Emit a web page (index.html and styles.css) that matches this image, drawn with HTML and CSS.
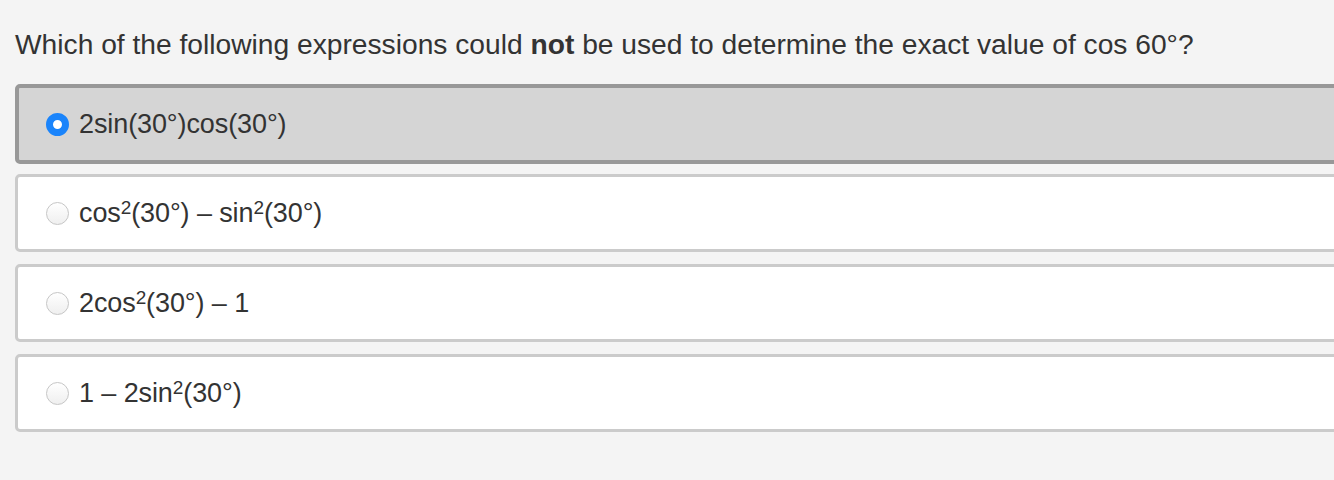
FILE: index.html
```html
<!DOCTYPE html>
<html>
<head>
<meta charset="utf-8">
<link rel="stylesheet" href="styles.css">
</head>
<body>
<div class="question">
  <p class="prompt">Which of the following expressions could <b>not</b> be used to determine the exact value of cos 60°?</p>
  <div class="options">
    <label class="option selected">
      <span class="radio checked"></span>
      <span class="text">2sin(30°)cos(30°)</span>
    </label>
    <label class="option">
      <span class="radio"></span>
      <span class="text">cos<sup>2</sup>(30°) – sin<sup>2</sup>(30°)</span>
    </label>
    <label class="option">
      <span class="radio"></span>
      <span class="text">2cos<sup>2</sup>(30°) – 1</span>
    </label>
    <label class="option">
      <span class="radio"></span>
      <span class="text">1 – 2sin<sup>2</sup>(30°)</span>
    </label>
  </div>
</div>
</body>
</html>
```
FILE: styles.css
```css
html, body {
  margin: 0;
  padding: 0;
  background: #f4f4f4;
}
body {
  font-family: "Liberation Sans", Arial, sans-serif;
  color: #333;
  width: 1334px;
  height: 480px;
  overflow: hidden;
}
.question {
  padding: 0 0 0 15px;
}
.prompt {
  margin: 0;
  padding-top: 28px;
  font-size: 28.2px;
  line-height: 32px;
  height: 56px;
}
.prompt b {
  font-weight: bold;
}
.options {
  display: flex;
  flex-direction: column;
  width: 1340px;
}
.option {
  display: flex;
  align-items: center;
  height: 72px;
  background: #fff;
  border: 3px solid #cbcbcb;
  border-radius: 5px;
  margin-bottom: 12px;
  padding-left: 28px;
  font-size: 27px;
}
.option.selected {
  background: #d5d5d5;
  border: 4px solid #989898;
  padding-left: 27px;
  margin-bottom: 10px;
}
.radio {
  width: 23px;
  height: 23px;
  border-radius: 50%;
  box-sizing: border-box;
  border: 1px solid #c6c6c6;
  background: linear-gradient(#ffffff, #efefef);
  margin-right: 10px;
  flex: none;
}
.radio.checked {
  border: 7px solid #1a84fb;
  background: #fff;
}
.text {
  line-height: 30px;
  letter-spacing: -0.1px;
}
sup {
  font-size: 19px;
  line-height: 0;
  vertical-align: 8px;
}
```
